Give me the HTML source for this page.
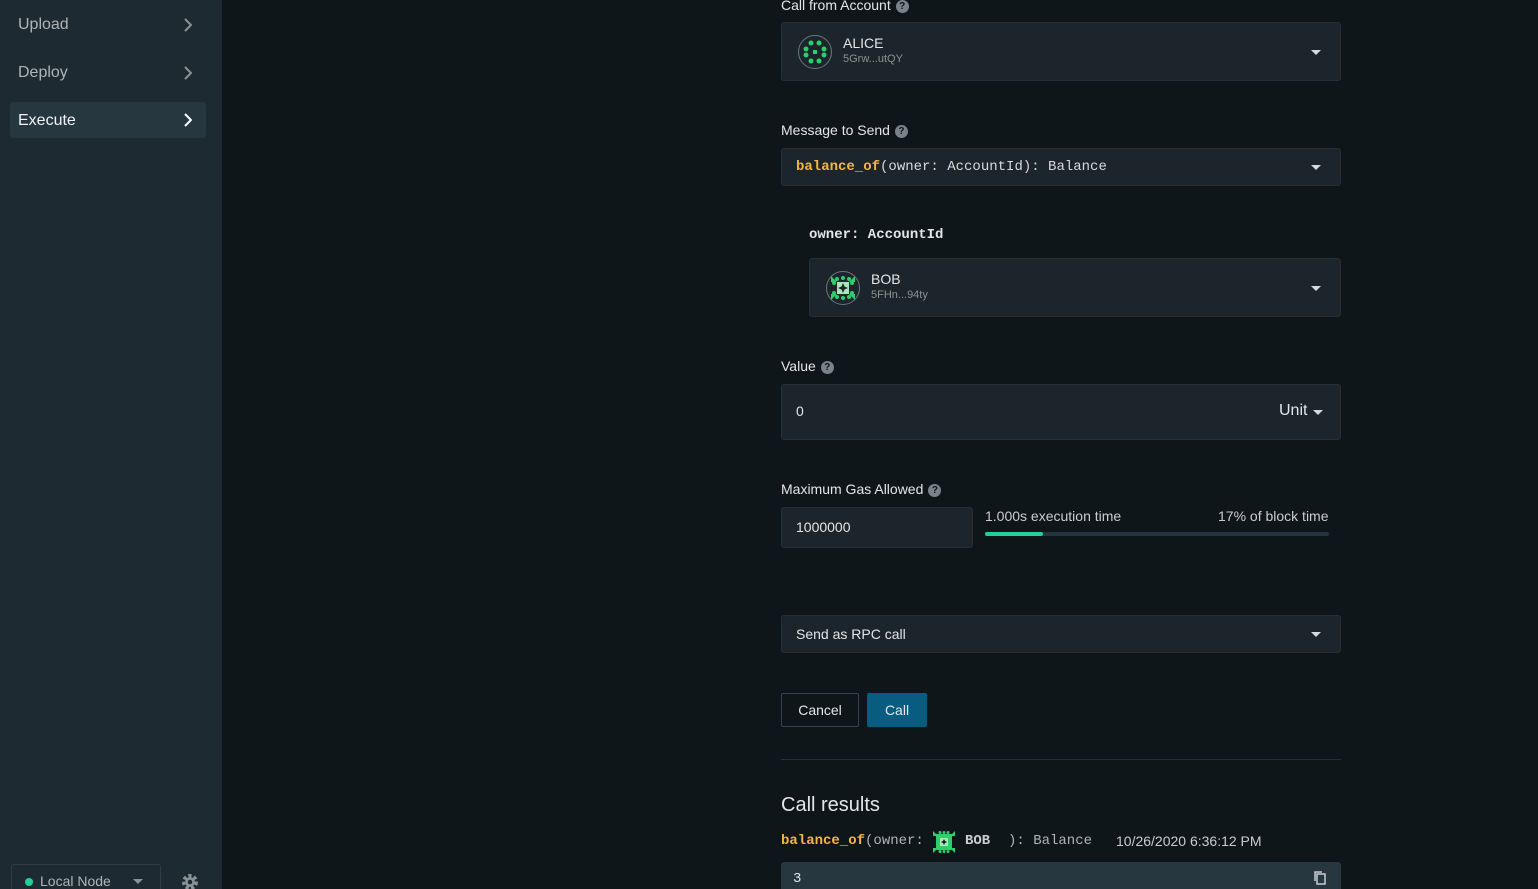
<!DOCTYPE html>
<html><head><style>
*{box-sizing:border-box;margin:0;padding:0}
html,body{width:1538px;height:889px;overflow:hidden}
body{background:#0f1619;font-family:"Liberation Sans",sans-serif;color:#e2e6e8;position:relative}
.side{position:absolute;left:0;top:0;width:222px;height:889px;background:#1e2a31}
.nav{position:absolute;left:10px;width:196px;height:36px;font-size:16px;color:#aeb5b9;padding:9px 8px;border-radius:3px}
.nav.act{background:#263740;color:#f0f2f3}
.nav svg{position:absolute;right:14px;top:11px}
.abs{position:absolute}
.lbl{position:absolute;left:781px;font-size:14px;color:#e2e6e8}
.q{display:inline-block;width:13px;height:13px;border-radius:50%;background:#7a8387;color:#0f1619;font-size:10px;font-weight:bold;text-align:center;line-height:13px;vertical-align:0;margin-left:5px;position:relative;top:-1px}
.box{position:absolute;background:#1b252b;border:1px solid #242f36;border-radius:3px}
.mono{font-family:"Liberation Mono","DejaVu Sans Mono",monospace}
.caret{position:absolute;width:0;height:0;border-left:5px solid transparent;border-right:5px solid transparent;border-top:5px solid #d6dadc}
</style></head><body>
<div class="side">
<div class="nav" style="top:7px">Upload<svg width="8" height="14" viewBox="0 0 8 14"><path d="M1 1l6 6-6 6" stroke="#8a9296" stroke-width="2" fill="none"/></svg></div>
<div class="nav" style="top:55px">Deploy<svg width="8" height="14" viewBox="0 0 8 14"><path d="M1 1l6 6-6 6" stroke="#8a9296" stroke-width="2" fill="none"/></svg></div>
<div class="nav act" style="top:102px;padding-top:10px">Execute<svg width="8" height="14" viewBox="0 0 8 14"><path d="M1 1l6 6-6 6" stroke="#fff" stroke-width="2" fill="none"/></svg></div>
<div class="abs" style="left:11px;top:864px;width:150px;height:30px;border:1px solid #2e3c44;border-radius:3px;font-size:14px;color:#aeb5b9;padding:8px 0 0 28px">Local Node<span style="position:absolute;left:13px;top:13px;width:8px;height:8px;border-radius:50%;background:#1fd195"></span><span class="caret" style="left:121px;top:14px;border-top-color:#8a9296"></span></div>
<svg class="abs" style="left:181px;top:873px" width="18" height="18" viewBox="0 0 18 18"><circle cx="9" cy="9" r="6" fill="none" stroke="#8a9296" stroke-width="4" stroke-dasharray="3 2.3"/><circle cx="9" cy="9" r="5" fill="#8a9296"/><circle cx="9" cy="9" r="2.3" fill="#1e2a31"/></svg>
</div>

<div class="lbl" style="top:-3px">Call from Account<span class="q">?</span></div>
<div class="box" style="left:781px;top:22px;width:560px;height:59px">
<svg class="abs" style="left:15px;top:11px" width="36" height="36" viewBox="0 0 36 36"><circle cx="18" cy="18" r="16.5" fill="#1b252b" stroke="#6d7579"/><g fill="#2bcf6c"><circle cx="14" cy="9" r="2.5"/><circle cx="22" cy="9" r="2.5"/><circle cx="9" cy="15" r="2.5"/><circle cx="27" cy="15" r="2.5"/><circle cx="9" cy="21" r="2.5"/><circle cx="27" cy="21" r="2.5"/><circle cx="14" cy="27" r="2.5"/><circle cx="22" cy="27" r="2.5"/><rect x="16" y="16" width="4" height="4"/></g></svg>
<div class="abs" style="left:61px;top:12px;font-size:14px">ALICE</div>
<div class="abs" style="left:61px;top:30px;font-size:11px;color:#8a9296">5Grw...utQY</div>
<span class="caret" style="left:529px;top:27px"></span></div>

<div class="lbl" style="top:122px">Message to Send<span class="q">?</span></div>
<div class="box mono" style="left:781px;top:148px;width:560px;height:38px;font-size:14px;padding:10px 14px;color:#d6dadc"><b style="color:#f5b545">balance_of</b>(owner: AccountId): Balance<span class="caret" style="left:529px;top:16px"></span></div>

<div class="abs mono" style="left:809px;top:227px;font-size:14px;font-weight:bold;color:#e2e6e8">owner: AccountId</div>
<div class="box" style="left:809px;top:258px;width:532px;height:59px">
<svg class="abs" style="left:15px;top:11px" width="36" height="36" viewBox="0 0 36 36"><circle cx="18" cy="18" r="16.5" fill="#1b252b" stroke="#6d7579"/><g fill="#2bcf6c"><circle cx="12" cy="9" r="2"/><circle cx="18" cy="8" r="2"/><circle cx="24" cy="9" r="2"/><circle cx="12" cy="27" r="2"/><circle cx="18" cy="28" r="2"/><circle cx="24" cy="27" r="2"/><circle cx="9" cy="13" r="2"/><circle cx="9" cy="23" r="2"/><circle cx="27" cy="13" r="2"/><circle cx="27" cy="23" r="2"/><path d="M6 6l6 6h-6zM30 6l-6 6h6zM6 30l6-6h-6zM30 30l-6-6h6z"/></g><rect x="12" y="12" width="12" height="12" fill="#a8e6b8"/><path d="M18 13l1.5 3.5 3.5 1.5-3.5 1.5-1.5 3.5-1.5-3.5-3.5-1.5 3.5-1.5z" fill="#1b252b"/></svg>
<div class="abs" style="left:61px;top:12px;font-size:14px">BOB</div>
<div class="abs" style="left:61px;top:30px;font-size:11px;color:#8a9296">5FHn...94ty</div>
<span class="caret" style="left:501px;top:27px"></span></div>

<div class="lbl" style="top:358px">Value<span class="q">?</span></div>
<div class="box" style="left:781px;top:384px;width:560px;height:56px;font-size:14px;padding:18px 14px">0<span class="abs" style="left:497px;top:17px;font-size:16px">Unit</span><span class="caret" style="left:531px;top:25px"></span></div>

<div class="lbl" style="top:481px">Maximum Gas Allowed<span class="q">?</span></div>
<div class="box" style="left:781px;top:507px;width:192px;height:41px;font-size:14px;padding:11px 14px">1000000</div>
<div class="abs" style="left:985px;top:508px;font-size:14px;color:#c8cdd0">1.000s execution time</div>
<div class="abs" style="left:1218px;top:508px;font-size:14px;color:#c8cdd0">17% of block time</div>
<div class="abs" style="left:985px;top:532px;width:344px;height:4px;background:#24343d;border-radius:2px"><div style="width:58px;height:4px;background:#1fd195;border-radius:2px"></div></div>

<div class="box" style="left:781px;top:615px;width:560px;height:38px;font-size:14px;padding:10px 14px">Send as RPC call<span class="caret" style="left:529px;top:16px"></span></div>

<div class="abs" style="left:781px;top:693px;width:78px;height:34px;border:1px solid #37444b;border-radius:2px;font-size:14px;text-align:center;line-height:32px">Cancel</div>
<div class="abs" style="left:867px;top:693px;width:60px;height:34px;background:#075c80;border-radius:2px;font-size:14px;text-align:center;line-height:34px">Call</div>

<div class="abs" style="left:781px;top:759px;width:560px;height:1px;background:#242f36"></div>
<div class="abs" style="left:781px;top:794px;font-size:20px">Call results</div>
<div class="abs mono" style="left:781px;top:833px;font-size:14px;color:#aeb5b9;white-space:pre"><b style="color:#f5b545">balance_of</b>(owner:</div>
<svg class="abs" style="left:933px;top:831px" width="22" height="22" viewBox="0 0 22 22"><g fill="#2bcf6c"><rect x="3" y="3" width="16" height="16"/><path d="M0 0l5 5h-5zM22 0l-5 5h5zM0 22l5-5h-5zM22 22l-5-5h5z"/><circle cx="7" cy="1.5" r="1.5"/><circle cx="11" cy="1.5" r="1.5"/><circle cx="15" cy="1.5" r="1.5"/><circle cx="7" cy="20.5" r="1.5"/><circle cx="11" cy="20.5" r="1.5"/><circle cx="15" cy="20.5" r="1.5"/></g><rect x="7" y="7" width="8" height="8" fill="#a8e6b8"/><path d="M11 8l1 2 2 1-2 1-1 2-1-2-2-1 2-1z" fill="#0f1619"/></svg>
<div class="abs mono" style="left:965px;top:833px;font-size:14px;font-weight:bold;color:#c8cdd0">BOB</div>
<div class="abs mono" style="left:1008px;top:833px;font-size:14px;color:#aeb5b9">): Balance</div>
<div class="abs" style="left:1116px;top:833px;font-size:14px;color:#c8cdd0">10/26/2020 6:36:12 PM</div>
<div class="abs mono" style="left:781px;top:862px;width:560px;height:30px;background:#263740;border-radius:3px;font-size:14px;padding:9px 12px">3
<svg class="abs" style="left:532px;top:8px" width="14" height="16" viewBox="0 0 14 16"><rect x="4" y="4" width="8" height="10" fill="none" stroke="#c8cdd0" stroke-width="1.5"/><path d="M2 11V2h7" fill="none" stroke="#c8cdd0" stroke-width="1.5"/></svg></div>
</body></html>
